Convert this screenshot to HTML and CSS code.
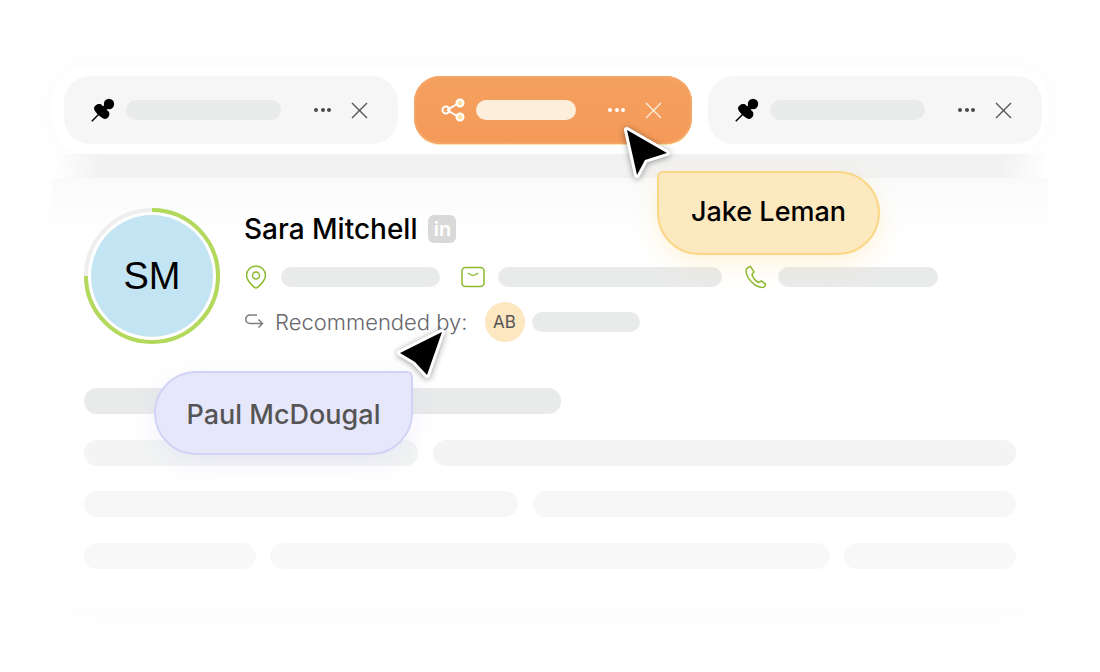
FILE: index.html
```html
<!DOCTYPE html>
<html lang="en">

<head>
  <meta charset="UTF-8">
  <title>Shared record</title>
  <link rel="stylesheet" href="styles.css">
</head>

<body>
  <div class="stage">

    <div class="tabbar">
      <div class="tab">
        <svg class="tab-icon" viewBox="0 0 24 24">
          <circle cx="18" cy="6" r="5.200" />
          <path d="M3 10.500C3 7.500 7 5 10 6.200L18 14c1.300 3-1 7-4 7-3 0-11-7.500-11-10.500z" />
          <path class="neck" d="M11 13l7-7" />
          <path class="needle" d="M.8 23.200l7-7" />
        </svg>
        <span class="bar tab-bar"></span>
        <span class="dots"><i></i><i></i><i></i></span>
        <svg class="close" viewBox="0 0 17 17"><path d="M1 1l15 15M16 1L1 16" /></svg>
      </div>
      <div class="tab tab-active">
        <svg class="tab-icon share" viewBox="0 0 24 24">
          <path d="M6 12l11-6.500M6 12l11 6.500" />
          <circle cx="5" cy="12" r="3.500" />
          <circle class="fill" cx="19" cy="5" r="3.500" />
          <circle class="fill" cx="19" cy="19" r="3.500" />
        </svg>
        <span class="bar tab-bar"></span>
        <span class="dots"><i></i><i></i><i></i></span>
        <svg class="close" viewBox="0 0 17 17"><path d="M1 1l15 15M16 1L1 16" /></svg>
      </div>
      <div class="tab">
        <svg class="tab-icon" viewBox="0 0 24 24">
          <circle cx="18" cy="6" r="5.200" />
          <path d="M3 10.500C3 7.500 7 5 10 6.200L18 14c1.300 3-1 7-4 7-3 0-11-7.500-11-10.500z" />
          <path class="neck" d="M11 13l7-7" />
          <path class="needle" d="M.8 23.200l7-7" />
        </svg>
        <span class="bar tab-bar"></span>
        <span class="dots"><i></i><i></i><i></i></span>
        <svg class="close" viewBox="0 0 17 17"><path d="M1 1l15 15M16 1L1 16" /></svg>
      </div>
    </div>

    <div class="band"></div>

    <div class="card">
      <div class="profile">
        <div class="avatar">
          <svg class="ring" viewBox="0 0 136 136">
            <circle class="ring-bg" cx="68" cy="68" r="66" />
            <circle class="ring-fg" cx="68" cy="68" r="66" pathLength="100" stroke-dasharray="75 25" />
          </svg>
          <span class="avatar-in">SM</span>
        </div>
        <div class="info">
          <div class="name-row">
            <h2>Sara Mitchell</h2>
            <span class="linkedin">in</span>
          </div>
          <div class="contact-row">
            <svg class="green-icon" viewBox="0 0 24 24"><path d="M12 23c-1 0-1.800-.7-3-1.900C6 18.200 2.500 14.500 2.500 10.500a9.500 9.500 0 0 1 19 0c0 4-3.500 7.700-6.500 10.600-1.200 1.200-2 1.900-3 1.900z" /><circle cx="12" cy="10.500" r="3.500" /></svg>
            <span class="bar w159"></span>
            <svg class="green-icon mail" viewBox="0 0 24 24"><rect x="1" y="2.500" width="22" height="19" rx="3.500" /><path d="M7 8c3 3 7 3 10 0" /></svg>
            <span class="bar w224"></span>
            <svg class="green-icon phone" viewBox="0 0 24 24"><path d="M4 2.500l2.500-1 3.500 5.500-2 2.500c1 3.500 3 6 6.500 8l2.800-1.500 4 2.800c.5 1.800-.8 3.700-2.800 3.700C11 22.500 2 13 2 5.500 2 4.200 2.700 3.200 4 2.500z" /></svg>
            <span class="bar w160"></span>
          </div>
          <div class="rec-row">
            <svg class="rec-icon" viewBox="0 0 20 20"><path d="M13 3H6a4 4 0 0 0 0 8.500h12M14.500 7.500l4 4-4 4" /></svg>
            <span class="rec-label">Recommended by:</span>
            <span class="badge">AB</span>
            <span class="bar w108"></span>
          </div>
        </div>
      </div>

      <div class="lines">
        <div class="line line-a"><span class="bar-lg w477"></span></div>
        <div class="line line-b"><span class="bar-lg w334"></span><span class="bar-lg grow"></span></div>
        <div class="line line-c"><span class="bar-lg w434"></span><span class="bar-lg grow"></span></div>
        <div class="line line-d"><span class="bar-lg w172"></span><span class="bar-lg grow"></span><span class="bar-lg w172"></span></div>
      </div>
    </div>

    <svg class="cursor cursor-1" viewBox="0 0 52 52"><path d="M5 4l40 23-22 7-8 15z" /></svg>
    <div class="tag tag-jake">Jake Leman</div>

    <svg class="cursor cursor-2" viewBox="0 0 52 52"><path d="M48 4L6 25l15 9 12 13z" /></svg>
    <div class="tag tag-paul">Paul McDougal</div>

  </div>
</body>

</html>
```

FILE: styles.css
```css
* {
  margin: 0;
  padding: 0;
  box-sizing: border-box;
}

body {
  background: #fff;
  font-family: "Inter", "Liberation Sans", sans-serif;
  overflow: hidden;
}

.stage {
  width: 1100px;
  height: 672px;
  padding: 66px 52px 0;
  position: relative;
  overflow: hidden;
}

.tabbar {
  display: flex;
  gap: 16px;
  height: 88px;
  padding: 10px 6px 10px 12px;
  background: #fff;
  border-radius: 34px;
  box-shadow: 0 0 36px rgba(0, 0, 0, .025);
  position: relative;
  z-index: 2;
}

.tab {
  flex: 0 0 334px;
  height: 68px;
  display: flex;
  align-items: center;
  padding: 0 30px 0 27px;
  background: #f6f6f6;
  border-radius: 26px;
}

.tab-active {
  flex-basis: 278px;
  background: linear-gradient(#f5a05f, #f49a58);
  box-shadow: inset 0 0 0 2px #f5a566, 0 1px 0 #fde3a8;
}

.tab-icon {
  width: 24px;
  height: 24px;
  flex: none;
  fill: #000;
}

.neck {
  stroke: #000;
  stroke-width: 5;
}

.needle {
  stroke: #000;
  stroke-width: 1.500;
}

.share {
  fill: none;
  stroke: #fff;
  stroke-width: 2;
}

.share .fill {
  fill: #fde4a6;
}

.bar {
  display: block;
  height: 20px;
  background: #e9eaea;
  border-radius: 10px;
  flex: none;
}

.tab-bar {
  width: 155px;
  margin-left: 11px;
}

.tab-active .tab-bar {
  width: 100px;
  background: #fdeedc;
}

.dots {
  display: flex;
  gap: 2.500px;
  margin-left: auto;
}

.dots i {
  width: 4px;
  height: 4px;
  border-radius: 50%;
  background: #4a4a4a;
}

.tab-active .dots i {
  background: #fff;
}

.close {
  width: 17px;
  height: 17px;
  margin-left: 20px;
  stroke: #555;
  stroke-width: 1.400;
  fill: none;
  flex: none;
}

.tab-active .close {
  stroke: #fdeedc;
}

.band {
  height: 24px;
  background: linear-gradient(90deg, #fff, #f3f3f3 5%, #f3f3f3 95%, #fff);
}

.card {
  height: 430px;
  padding: 30px 32px;
  background: linear-gradient(#f9fafa, #fff 60px);
  position: relative;
  border-radius: 0 0 34px 34px;
  box-shadow: 0 10px 50px rgba(0, 0, 0, .015);
}

.profile {
  display: flex;
  gap: 24px;
}

.avatar {
  width: 136px;
  height: 136px;
  flex: none;
  position: relative;
  display: flex;
  align-items: center;
  justify-content: center;
}

.ring {
  position: absolute;
  inset: 0;
  transform: rotate(-90deg);
}

.ring circle {
  fill: none;
  stroke-width: 4;
}

.ring-bg {
  stroke: #eeeeee;
}

.ring-fg {
  stroke: #b3d95a;
}

.avatar-in {
  width: 122px;
  height: 122px;
  border-radius: 50%;
  background: #c3e5f3;
  color: #000;
  font-family: "Liberation Sans", sans-serif;
  font-size: 38px;
  display: flex;
  align-items: center;
  justify-content: center;
}

.info {
  padding-top: 3px;
}

.name-row {
  display: flex;
  align-items: center;
  gap: 11px;
  height: 36px;
}

.name-row h2 {
  font-size: 28px;
  font-weight: 500;
  color: #000;
}

.linkedin {
  width: 28px;
  height: 28px;
  border-radius: 6px;
  background: #d9d9d9;
  color: #fff;
  font-size: 20px;
  font-weight: 600;
  display: flex;
  align-items: center;
  justify-content: center;
}

.contact-row {
  display: flex;
  align-items: center;
  height: 24px;
  margin-top: 18px;
}

.green-icon {
  width: 24px;
  height: 24px;
  flex: none;
  fill: none;
  stroke: #8ab92e;
  stroke-width: 1.500;
}

.contact-row .bar {
  margin-left: 13px;
}

.mail {
  margin-left: 21px;
}

.phone {
  margin-left: 22px;
}

.phone + .bar {
  margin-left: 10px;
}

.w159 {
  width: 159px;
}

.w160 {
  width: 160px;
}

.w224 {
  width: 224px;
}

.w108 {
  width: 108px;
}

.rec-row {
  display: flex;
  align-items: center;
  height: 40px;
  margin-top: 13px;
}

.rec-icon {
  width: 20px;
  height: 20px;
  fill: none;
  stroke: #7c7c7c;
  stroke-width: 1.500;
  flex: none;
}

.rec-label {
  margin-left: 11px;
  font-size: 22px;
  font-weight: 300;
  color: #66666b;
}

.badge {
  width: 40px;
  height: 40px;
  margin-left: 17px;
  border-radius: 50%;
  background: #fde7c0;
  color: #555;
  font-size: 17px;
  display: flex;
  align-items: center;
  justify-content: center;
}

.rec-row .bar {
  margin-left: 7px;
}

.lines {
  margin-top: 44px;
  display: flex;
  flex-direction: column;
  gap: 25.500px;
}

.line {
  display: flex;
  gap: 15px;
}

.line-d {
  gap: 14px;
}

.bar-lg {
  display: block;
  height: 26px;
  border-radius: 13px;
}

.line-a .bar-lg {
  background: #e9eaea;
}

.line-b .bar-lg {
  background: #f3f4f3;
}

.line-c .bar-lg {
  background: #f7f7f7;
}

.line-d .bar-lg {
  background: #f8f8f8;
}

.grow {
  flex: 1;
}

.w477 {
  width: 477px;
}

.w334 {
  width: 334px;
}

.w434 {
  width: 434px;
}

.w172 {
  width: 172px;
}

.cursor {
  position: absolute;
  z-index: 5;
  width: 52px;
  height: 52px;
  fill: #000;
  stroke: #fff;
  stroke-width: 6;
  stroke-linejoin: round;
  paint-order: stroke;
  overflow: visible;
  filter: drop-shadow(0 1px 3px rgba(0, 0, 0, .4));
}

.cursor-1 {
  left: 622px;
  top: 126px;
}

.cursor-2 {
  left: 394px;
  top: 328px;
}

.tag {
  position: absolute;
  z-index: 4;
  height: 84px;
  display: flex;
  align-items: center;
  justify-content: center;
  font-size: 27px;
  font-weight: 500;
}

.tag-jake {
  left: 657px;
  top: 171px;
  width: 223px;
  padding-bottom: 4px;
  color: #000;
  background: #fde9bf;
  border: 2px solid #fbd684;
  border-radius: 6px 42px 42px 42px;
  box-shadow: 0 8px 24px rgba(253, 214, 132, .3);
}

.tag-paul {
  left: 154px;
  top: 371px;
  width: 259px;
  padding-top: 2px;
  color: #555;
  background: #e7e7fb;
  border: 2px solid #d2d2f7;
  border-radius: 42px 6px 42px 42px;
  box-shadow: 0 8px 24px rgba(207, 207, 246, .3);
}
```
